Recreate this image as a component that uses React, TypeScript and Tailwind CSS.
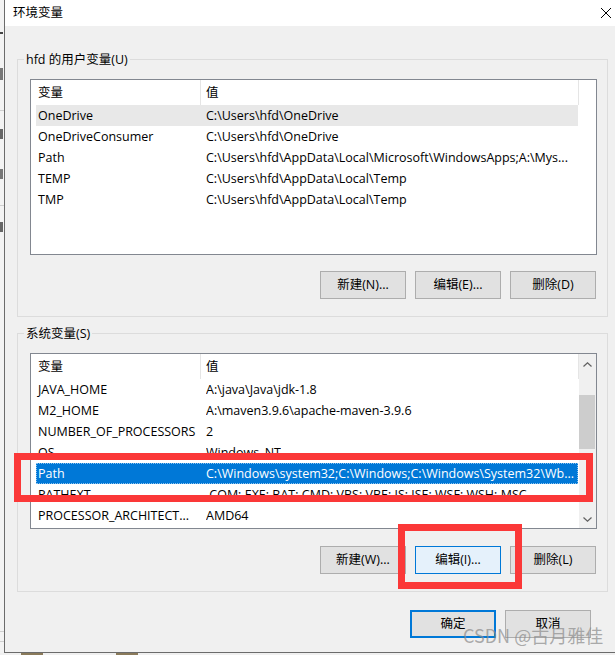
type Row = [string, string];

const userVars: Row[] = [
  ["OneDrive", "C:\\Users\\hfd\\OneDrive"],
  ["OneDriveConsumer", "C:\\Users\\hfd\\OneDrive"],
  ["Path", "C:\\Users\\hfd\\AppData\\Local\\Microsoft\\WindowsApps;A:\\Mys..."],
  ["TEMP", "C:\\Users\\hfd\\AppData\\Local\\Temp"],
  ["TMP", "C:\\Users\\hfd\\AppData\\Local\\Temp"],
];

const sysVars: Row[] = [
  ["JAVA_HOME", "A:\\java\\Java\\jdk-1.8"],
  ["M2_HOME", "A:\\maven3.9.6\\apache-maven-3.9.6"],
  ["NUMBER_OF_PROCESSORS", "2"],
  ["OS", "Windows_NT"],
  ["Path", "C:\\Windows\\system32;C:\\Windows;C:\\Windows\\System32\\Wb..."],
  ["PATHEXT", ".COM;.EXE;.BAT;.CMD;.VBS;.VBE;.JS;.JSE;.WSF;.WSH;.MSC"],
  ["PROCESSOR_ARCHITECT...", "AMD64"],
];

function Chevron({ up }: { up?: boolean }) {
  return (
    <svg width="9" height="5" viewBox="0 0 9 5" fill="none" stroke="#606060" strokeWidth="1.2">
      {up ? <polyline points="0.5,4.5 4.5,0.8 8.5,4.5" /> : <polyline points="0.5,0.5 4.5,4.2 8.5,0.5" />}
    </svg>
  );
}

function ListView({
  rows,
  hovered,
  selected,
  scroll,
}: {
  rows: Row[];
  hovered?: number;
  selected?: number;
  scroll?: boolean;
}) {
  return (
    <div className="ml-[12px] mr-[10px] mt-[11px] h-[176px] border border-[#828790] bg-white flex overflow-hidden">
      <div className="w-[548px] flex flex-col shrink-0">
        {/* header */}
        <div className="h-[25px] flex items-center shrink-0">
          <div className="w-[169px] pl-[7px] pt-[1px]">变量</div>
          <div className="w-px h-[25px] bg-[#e5e5e5]" />
          <div className="w-[377px] pl-[5px] pt-[1px]">值</div>
          <div className="w-px h-[25px] bg-[#e5e5e5]" />
        </div>
        {rows.map(([name, value], i) => {
          const sel = i === selected;
          const hov = i === hovered;
          return (
            <div
              key={name + i}
              className={
                "ml-[5px] w-[542px] h-[21px] pt-[1px] flex items-center shrink-0 whitespace-nowrap " +
                (sel
                  ? "bg-[#0078d7] text-white outline outline-1 outline-dotted outline-[#8cc3ee] -outline-offset-1"
                  : hov
                  ? "bg-[#e8e8e8]"
                  : "")
              }
            >
              <div className="w-[170px] pl-[2px] overflow-hidden shrink-0">{name}</div>
              <div className="overflow-hidden">{value}</div>
            </div>
          );
        })}
      </div>
      {scroll ? (
        <div className="w-[17px] flex flex-col bg-[#f0f0f0]">
          <div className="h-[20px] flex items-center justify-center shrink-0">
            <Chevron up />
          </div>
          <div className="mt-[21px] h-[54px] mr-[1px] bg-[#cdcdcd]" />
          <div className="flex-1" />
          <div className="h-[17px] flex items-center justify-center shrink-0">
            <Chevron />
          </div>
        </div>
      ) : (
        <div className="w-[17px]" />
      )}
    </div>
  );
}

function Btn({ label, active, def }: { label: string; active?: boolean; def?: boolean }) {
  const look = def
    ? "border-2 border-[#0078d7] bg-[#e1e1e1]"
    : active
    ? "border border-[#0078d7] bg-[#e5f1fb]"
    : "border border-[#adadad] bg-[#e1e1e1]";
  return (
    <button className={"w-[86px] h-[28px] flex items-center justify-center text-[12.5px] " + look}>
      {label}
    </button>
  );
}

function Group({ title, children }: { title: string; children: React.ReactNode }) {
  return (
    <fieldset className="ml-[12px] mr-[7px] border border-[#dcdcdc] min-w-0 pb-[17px]">
      <legend className="ml-[6px] px-[2px] leading-[16px] pt-[1px]">{title}</legend>
      {children}
    </fieldset>
  );
}

export default function App() {
  return (
    <div className="relative w-[615px] h-[655px] overflow-hidden bg-[#f0f0f0] text-[12.5px] text-black font-['Segoe_UI','Open_Sans','Noto_Sans_CJK_SC',sans-serif]">
      <div className="flex h-[653px]">
        {/* parent window peeking out on the left */}
        <div className="w-[4px] flex flex-col bg-[#f3f3f3] shrink-0">
          <div className="h-[32px]" />
          <div className="h-[2px] w-[3px] bg-[#444]" />
          <div className="h-[34px]" />
          <div className="h-[12px] w-[3px] bg-[#777]" />
          <div className="h-[30px]" />
          <div className="h-px bg-[#cfcfcf]" />
          <div className="h-[18px]" />
          <div className="h-[10px] w-[3px] bg-[#666]" />
          <div className="h-[30px]" />
          <div className="h-[10px] w-[3px] bg-[#777]" />
          <div className="h-[26px]" />
          <div className="h-px bg-[#cfcfcf]" />
          <div className="h-[16px]" />
          <div className="h-[10px] w-[3px] bg-[#666]" />
          <div className="flex-1" />
          <div className="h-px bg-[#cfcfcf]" />
          <div className="h-[9px]" />
          <div className="h-px bg-[#cfcfcf]" />
          <div className="h-[11px]" />
        </div>

        {/* dialog */}
        <div className="flex-1 flex flex-col border-l border-b border-[#6b6b6b] bg-[#f0f0f0]">
          <div className="h-[26px] bg-white flex items-center justify-between pl-[8px] pr-[4px] shrink-0">
            <span>环境变量</span>
            <svg width="10" height="10" viewBox="0 0 10 10" stroke="#000" strokeWidth="1">
              <line x1="0" y1="0" x2="10" y2="10" />
              <line x1="10" y1="0" x2="0" y2="10" />
            </svg>
          </div>

          <div className="flex flex-col pt-[25px]">
            <Group title="hfd 的用户变量(U)">
              <ListView rows={userVars} hovered={0} />
              <div className="mt-[16px] pr-[11px] flex justify-end gap-[9px]">
                <Btn label="新建(N)..." />
                <Btn label="编辑(E)..." />
                <Btn label="删除(D)" />
              </div>
            </Group>

            <div className="h-[8px]" />

            <Group title="系统变量(S)">
              <ListView rows={sysVars} selected={4} scroll />
              <div className="mt-[17px] pr-[11px] flex justify-end gap-[9px]">
                <Btn label="新建(W)..." />
                <Btn label="编辑(I)..." active />
                <Btn label="删除(L)" />
              </div>
            </Group>

            <div className="mt-[18px] pr-[24px] flex justify-end gap-[9px]">
              <Btn label="确定" def />
              <Btn label="取消" />
            </div>
          </div>
        </div>
      </div>

      {/* strip of the window underneath */}
      <div className="h-[2px] flex bg-[#f0f0f0]">
        <div className="w-[21px]" />
        <div className="w-[22px] bg-[#8a7a5a]" />
        <div className="w-[73px]" />
        <div className="w-[22px] bg-[#8a7a5a]" />
      </div>

      {/* screenshot annotations */}
      <div className="absolute left-[14px] top-[453px] w-[579px] h-[49px] border-[7px] border-[#fb3838]" />
      <div className="absolute left-[398px] top-[524px] w-[124px] h-[65px] border-[7px] border-[#fb3838]" />
      <div className="absolute left-[463px] top-[624px] text-[18px] leading-[22px] text-[#8a8a8a]/70 font-['Noto_Sans_CJK_SC',sans-serif] whitespace-nowrap">
        CSDN @古月雅佳
      </div>
    </div>
  );
}
